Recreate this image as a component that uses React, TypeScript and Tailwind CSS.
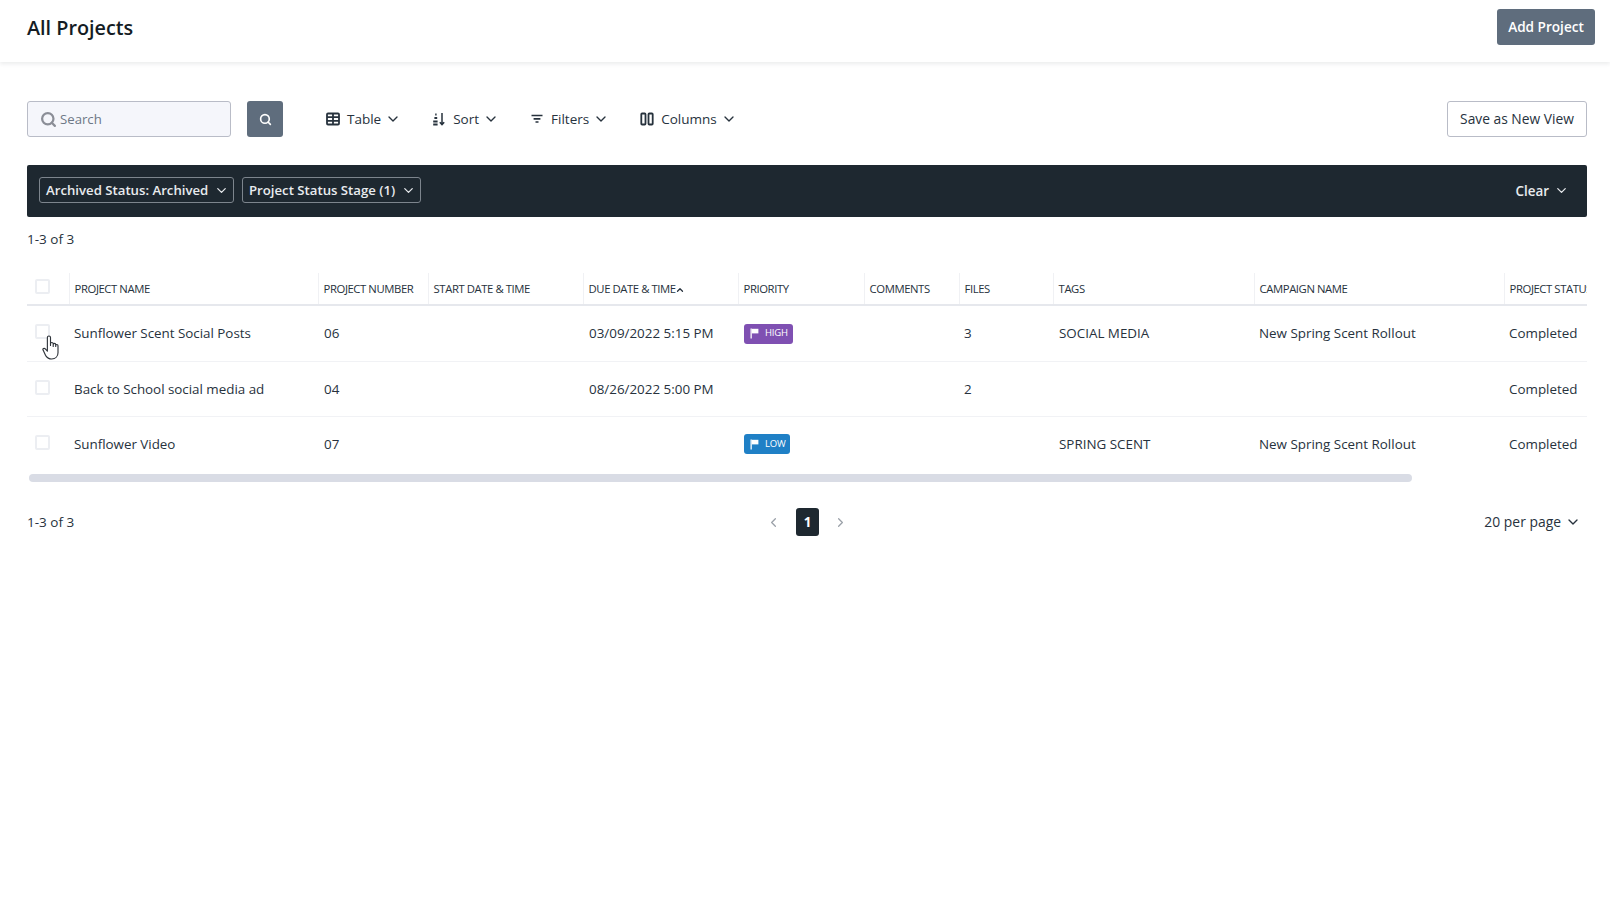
import React from 'react';
import { ChevronDown, ChevronLeft, ChevronRight, ChevronUp, Search } from 'lucide-react';

const FONT = "font-['Open_Sans','Noto_Sans',sans-serif]";
const GRID = 'grid grid-cols-[42px_249px_110px_155px_155px_126px_95px_94px_201px_250px_100px]';

const columns = [
  'PROJECT NAME',
  'PROJECT NUMBER',
  'START DATE & TIME',
  'DUE DATE & TIME',
  'PRIORITY',
  'COMMENTS',
  'FILES',
  'TAGS',
  'CAMPAIGN NAME',
  'PROJECT STATUS',
];

const rows = [
  { name: 'Sunflower Scent Social Posts', num: '06', due: '03/09/2022 5:15 PM', priority: 'HIGH', files: '3', tags: 'SOCIAL MEDIA', campaign: 'New Spring Scent Rollout', h: 'h-[56px]' },
  { name: 'Back to School social media ad', num: '04', due: '08/26/2022 5:00 PM', priority: '', files: '2', tags: '', campaign: '', h: 'h-[55px]' },
  { name: 'Sunflower Video', num: '07', due: '', priority: 'LOW', files: '', tags: 'SPRING SCENT', campaign: 'New Spring Scent Rollout', h: 'h-[54px]' },
];

const TableIcon = () => (
  <svg width="14" height="14" viewBox="0 0 14 14" fill="none" stroke="currentColor" strokeWidth="1.8">
    <rect x="1" y="1.5" width="12" height="11" rx="1" />
    <path d="M1 5.2h12M1 8.8h12M7 1.5v11" />
  </svg>
);

const SortIcon = () => (
  <svg width="14" height="14" viewBox="0 0 14 14" fill="none" stroke="currentColor" strokeWidth="1.5">
    <path d="M10 1v11.5M7.8 10.2 10 12.6l2.2-2.4" />
    <path d="M3.2 2.5h1.4M2.4 6h2.8M1.2 9.5h4.4M1.2 12.5h4.4" strokeWidth="1.8" />
  </svg>
);

const FilterIcon = () => (
  <svg width="14" height="14" viewBox="0 0 14 14" fill="none" stroke="currentColor" strokeWidth="1.7">
    <path d="M1.5 3.5h11M3.6 6.8h6.8M5.5 10h3" />
  </svg>
);

const ColumnsIcon = () => (
  <svg width="14" height="14" viewBox="0 0 14 14" fill="none" stroke="currentColor" strokeWidth="1.8">
    <rect x="1.3" y="1.5" width="4.2" height="11" rx="0.8" />
    <rect x="8.5" y="1.5" width="4.2" height="11" rx="0.8" />
  </svg>
);

const FlagIcon = () => (
  <svg width="9" height="11" viewBox="0 0 9 11" fill="white">
    <path d="M0.5 0.5h1.3v10H0.5z" />
    <path d="M1.8 0.8H8.4V5.4H1.8z" />
    <path d="M3 2h4.2v2.2H3z" fillOpacity="0.3" />
  </svg>
);

const HandCursor = () => (
  <svg width="17" height="25" viewBox="0 0 16 24" fill="white" stroke="#2f343a" strokeWidth="1.1" strokeLinejoin="round" className="absolute left-[42px] top-[335px]">
    <path d="M5 2.5a1.5 1.5 0 0 1 3 0V10V8.5a1.3 1.3 0 0 1 2.6 0V11V9.3a1.2 1.2 0 0 1 2.4 0V11V10.2a1.1 1.1 0 0 1 2.2 0V17c0 3.5-2.5 6-6 6c-3 0-4.5-1.2-6-3.5L0.9 14.5c-.7-1.2 1-2.4 2.1-1.2L5 15.5Z" />
  </svg>
);

const Tool = ({ icon, label }: { icon: React.ReactNode; label: string }) => (
  <button className="flex items-center text-[13.5px] text-[#27323d]">
    {icon}
    <span className="ml-[7px]">{label}</span>
    <ChevronDown size={16} strokeWidth={2} className="ml-[4px]" />
  </button>
);

const Chip = ({ label, w }: { label: string; w: string }) => (
  <button className={`flex h-[26px] items-center justify-between rounded-[3px] border border-[#7d858d] pl-[6px] pr-[4px] text-[13.2px] font-semibold text-[#e8ebee] ${w}`}>
    <span className="pt-[1px]">{label}</span>
    <ChevronDown size={15} strokeWidth={2} />
  </button>
);

const Priority = ({ level }: { level: string }) => {
  if (!level) return null;
  const high = level === 'HIGH';
  return (
    <span className={`flex h-[20px] items-center gap-[6px] rounded-[3px] pl-[6px] text-[9.5px] tracking-[-0.2px] text-white ${high ? 'w-[49px] bg-[#7f50b2]' : 'w-[46px] bg-[#1f80c6]'}`}>
      <FlagIcon />
      {level}
    </span>
  );
};

const Checkbox = () => (
  <span className="block h-[15px] w-[15px] rounded-[2px] border-2 border-[#eceef2] bg-white" />
);

export default function App() {
  return (
    <div className={`relative min-h-[916px] w-[1610px] overflow-hidden bg-white ${FONT}`}>
      <header className="flex h-[62px] items-center justify-between pb-[8px] pl-[27px] pr-[15px] shadow-[0_2px_4px_rgba(30,40,60,0.09)]">
        <h1 className="pt-[1px] text-[19.8px] font-semibold text-[#141c24]">All Projects</h1>
        <button className="h-[36px] w-[98px] rounded-[3px] bg-[#5f6d7d] text-[13.6px] font-semibold text-white">Add Project</button>
      </header>

      <main className="pl-[27px] pr-[23px]">
        <div className="mt-[39px] flex items-center">
          <div className="flex h-[36px] w-[204px] items-center rounded-[3px] border border-[#b9bcc7] bg-[#f5f6fb] pl-[12px] text-[13.2px] text-[#6d7886]">
            <Search size={17} strokeWidth={3.2} className="text-[#8b8e97]" />
            <span className="ml-[3px] pt-[1px]">Search</span>
          </div>
          <button className="ml-[16px] flex h-[36px] w-[36px] items-center justify-center rounded-[3px] bg-[#5f6d7d]">
            <Search size={13} strokeWidth={3} className="text-white" />
          </button>
          <div className="ml-[43px] flex items-center gap-[31px]">
            <Tool icon={<TableIcon />} label="Table" />
            <Tool icon={<SortIcon />} label="Sort" />
            <Tool icon={<FilterIcon />} label="Filters" />
            <Tool icon={<ColumnsIcon />} label="Columns" />
          </div>
          <button className="ml-auto h-[36px] w-[140px] rounded-[3px] border border-[#b9bcc7] bg-white text-[13.8px] text-[#27323d]">Save as New View</button>
        </div>

        <div className="mt-[28px] flex h-[52px] items-center rounded-[2px] bg-[#1e2830] pb-[2px] pl-[12px] pr-[18px]">
          <div className="flex gap-[8px]">
            <Chip label="Archived Status: Archived" w="w-[195px]" />
            <Chip label="Project Status Stage (1)" w="w-[179px]" />
          </div>
          <button className="ml-auto mt-[2px] flex items-center gap-[5px] text-[13.4px] font-semibold text-[#e8ebee]">
            Clear
            <ChevronDown size={15} strokeWidth={2} />
          </button>
        </div>

        <div className="mt-[12px] h-[20px] text-[13.5px] leading-[20px] text-[#27323d]">1-3 of 3</div>

        <div className="mt-[24px] overflow-hidden">
          <div className={`${GRID} h-[33px] border-b-2 border-[#e6e8ed]`}>
            <div className="flex justify-center pr-[11px] pt-[6px]">
              <Checkbox />
            </div>
            {columns.map((col) => (
              <div key={col} className="flex items-center whitespace-nowrap border-l border-[#f0f1f4] pl-[4.6px] pt-[2px] text-[11.3px] tracking-[-0.42px] text-[#27323d]">
                {col}
                {col === 'DUE DATE & TIME' && <ChevronUp size={10} strokeWidth={3} className="-ml-[1px]" />}
              </div>
            ))}
          </div>
          {rows.map((row) => (
            <div key={row.name} className={`${GRID} ${row.h} items-center border-b border-[#f1f2f5] text-[13.4px] text-[#27323d] last:border-b-0`}>
              <div className="flex justify-center pb-[4px] pr-[11px]">
                <Checkbox />
              </div>
              <div className="pl-[5px] tracking-[-0.02px]">{row.name}</div>
              <div className="pl-[6px]">{row.num}</div>
              <div />
              <div className="pl-[6px]">{row.due}</div>
              <div className="pl-[6px]"><Priority level={row.priority} /></div>
              <div />
              <div className="pl-[5px]">{row.files}</div>
              <div className="pl-[6px]">{row.tags}</div>
              <div className="pl-[5px]">{row.campaign}</div>
              <div className="pl-[5px]">Completed</div>
            </div>
          ))}
        </div>

        <div className="ml-[2px] mt-[3px] h-[8px] w-[1383px] rounded-[4px] bg-[#d9dce5]" />

        <div className="relative mt-[26px] flex h-[28px] items-center justify-between">
          <span className="text-[13.5px] text-[#27323d]">1-3 of 3</span>
          <div className="absolute left-[739px] top-0 flex items-center">
            <ChevronLeft size={15} className="text-[#9aa0a8]" />
            <span className="ml-[15px] mr-[14px] flex h-[28px] w-[23px] items-center justify-center rounded-[3px] bg-[#1e2830] text-[13.5px] font-bold text-white">1</span>
            <ChevronRight size={15} className="text-[#9aa0a8]" />
          </div>
          <button className="flex items-center gap-[4px] pr-[6px] text-[13.9px] text-[#27323d]">
            20 per page
            <ChevronDown size={16} strokeWidth={2} />
          </button>
        </div>
      </main>

      <HandCursor />
    </div>
  );
}
